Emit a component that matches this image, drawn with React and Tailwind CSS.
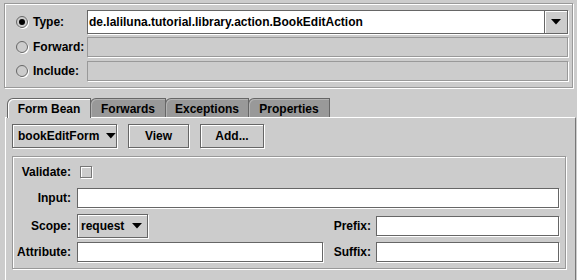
import React from 'react';

const font = { fontFamily: "'Liberation Sans', Arial, sans-serif" };

function Arrow() {
  return (
    <svg width="10" height="6" viewBox="0 0 10 6" className="block">
      <polygon points="0,0 10,0 5,5.5" fill="#000" />
    </svg>
  );
}

function Radio({ checked }) {
  return (
    <div className="w-[12px] h-[12px] rounded-full border border-[#666] bg-[#ccc] shadow-[1px_1px_0_#fff] flex items-center justify-center shrink-0">
      {checked && <div className="w-[6px] h-[6px] rounded-full bg-black" />}
    </div>
  );
}

function Field({ className = '' }) {
  return <div className={`bg-white border border-[#666] shadow-[1px_1px_0_#fff] ${className}`} />;
}

function Disabled({ className = '' }) {
  return <div className={`bg-[#ccc] border border-[#999] shadow-[1px_1px_0_#fff] ${className}`} />;
}

function Button({ children, className = '' }) {
  return (
    <div className={`border border-[#666] shadow-[inset_1px_1px_0_#fff,1px_1px_0_#fff] flex items-center justify-center ${className}`}>
      {children}
    </div>
  );
}

export default function App() {
  const tabs = ['Form Bean', 'Forwards', 'Exceptions', 'Properties'];
  const widths = ['w-[84px]', 'w-[76px]', 'w-[84px]', 'w-[82px]'];

  return (
    <div className="w-[577px] h-[280px] bg-[#cccccc] overflow-hidden text-[12px] font-bold text-black leading-none" style={font}>
      {/* oberste gruppe */}
      <div className="ml-[4px] mt-[3px] w-[569px] h-[85px] border border-[#999] shadow-[inset_1px_1px_0_#fff,1px_1px_0_#fff] pt-[6px] pr-[4px] flex flex-col">
        <div className="flex items-center h-[24px]">
          <div className="w-[82px] flex items-center pl-[11px] gap-[5px]"><Radio checked /><span>Type:</span></div>
          <div className="flex-1 h-[24px] flex border border-[#666] shadow-[1px_1px_0_#fff]">
            <div className="flex-1 bg-white flex items-center pl-[1px]">de.laliluna.tutorial.library.action.BookEditAction</div>
            <div className="w-[23px] border-l border-[#666] bg-[#ccc] shadow-[inset_1px_1px_0_#fff] flex items-center justify-center"><Arrow /></div>
          </div>
        </div>
        <div className="flex items-center h-[20px] mt-[3px]">
          <div className="w-[82px] flex items-center pl-[11px] gap-[5px]"><Radio /><span>Forward:</span></div>
          <Disabled className="flex-1 h-[20px]" />
        </div>
        <div className="flex items-center h-[20px] mt-[4px]">
          <div className="w-[82px] flex items-center pl-[11px] gap-[5px]"><Radio /><span>Include:</span></div>
          <Disabled className="flex-1 h-[20px]" />
        </div>
      </div>

      {/* tabs */}
      <div className="ml-[5px] mt-[10px]">
        <div className="flex pl-[2px] h-[19px] items-end">
          {tabs.map((t, i) => (
            <div key={t}
              className={`${widths[i]} ${i > 0 ? '-ml-px' : ''} h-[19px] rounded-tl-[6px] border-l border-t border-r border-[#666] flex items-center justify-center pt-[1px] ${i === 0 ? 'bg-[#ccc] shadow-[inset_1px_1px_0_#fff] relative z-10 h-[20px] -mb-px' : 'bg-[#999] shadow-[inset_1px_1px_0_#b3b3b3]'}`}>
              {t}
            </div>
          ))}
        </div>
        <div className="w-[571px] h-[170px] border-t border-l border-white border-r border-r-[#777] pl-[6px] pt-[6px]">
          <div className="flex items-center gap-[11px] h-[24px]">
            <Button className="w-[105px] h-[24px] justify-start pl-[5px] gap-[7px]"><span>bookEditForm</span><Arrow /></Button>
            <Button className="w-[61px] h-[24px]">View</Button>
            <Button className="w-[64px] h-[24px]">Add...</Button>
          </div>

          <div className="mt-[8px] w-[554px] h-[113px] border border-[#999] shadow-[inset_1px_1px_0_#fff,1px_1px_0_#fff] pt-[8px] pr-[6px]">
            <div className="flex items-center h-[14px]">
              <div className="w-[58px] text-right">Validate:</div>
              <div className="ml-[9px] w-[12px] h-[12px] border border-[#777] shadow-[inset_1px_1px_0_#fff,1px_1px_0_#fff]" />
            </div>
            <div className="flex items-center h-[20px] mt-[9px]">
              <div className="w-[58px] text-right">Input:</div>
              <Field className="ml-[6px] flex-1 h-[20px]" />
            </div>
            <div className="flex items-center h-[24px] mt-[6px]">
              <div className="w-[58px] text-right">Scope:</div>
              <Button className="ml-[6px] w-[71px] h-[24px] justify-start pl-[3px] gap-[8px]"><span>request</span><Arrow /></Button>
              <div className="flex-1" />
              <div className="w-[38px] text-right">Prefix:</div>
              <Field className="ml-[5px] w-[183px] h-[20px]" />
            </div>
            <div className="flex items-center h-[20px] mt-[4px]">
              <div className="w-[58px] text-right">Attribute:</div>
              <Field className="ml-[6px] w-[246px] h-[20px]" />
              <div className="flex-1" />
              <div className="w-[38px] text-right">Suffix:</div>
              <Field className="ml-[5px] w-[183px] h-[20px]" />
            </div>
          </div>
        </div>
      </div>
    </div>
  );
}
